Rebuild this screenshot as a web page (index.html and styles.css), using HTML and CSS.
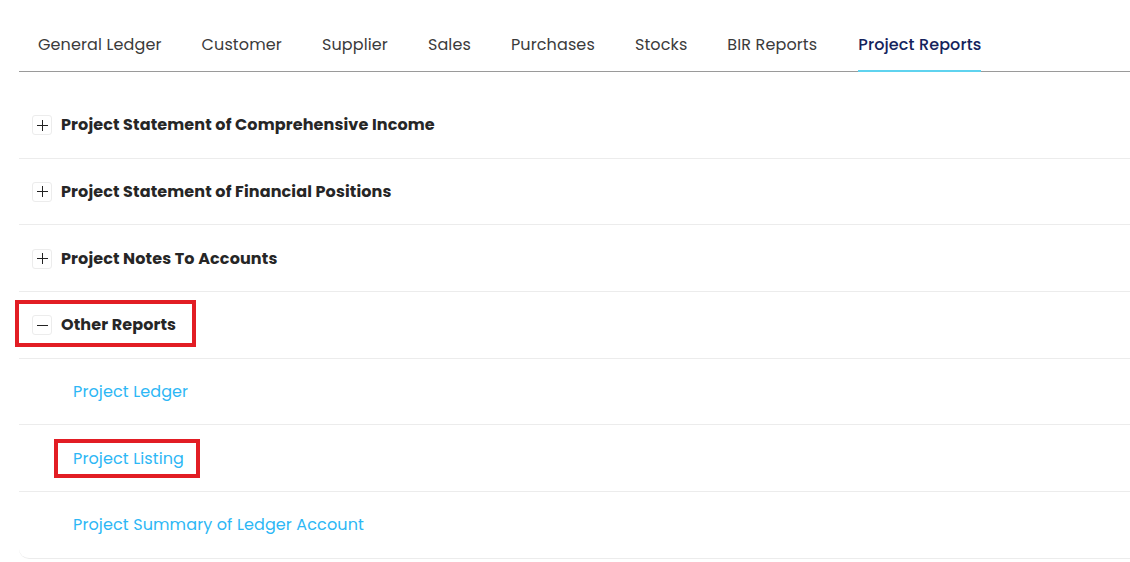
FILE: index.html
```html
<!DOCTYPE html>
<html lang="en">
<head>
  <meta charset="UTF-8" />
  <title>Reports</title>
  <meta name="viewport" content="width=device-width, initial-scale=1.0" />
  <link rel="stylesheet" href="styles.css">
</head>
<body>
  <div class="page">
    <div class="tabs">
      <div class="tab">General Ledger</div>
      <div class="tab">Customer</div>
      <div class="tab">Supplier</div>
      <div class="tab">Sales</div>
      <div class="tab">Purchases</div>
      <div class="tab">Stocks</div>
      <div class="tab">BIR Reports</div>
      <div class="tab active">Project Reports</div>
    </div>

    <div class="report-list">
      <div class="row">
        <div class="toggle">
          <span class="icon"><svg width="11" height="11" viewBox="0 0 11 11"><path d="M0 5.5h11M5.5 0v11" stroke="#222" stroke-width="1"/></svg></span>
          Project Statement of Comprehensive Income
        </div>
      </div>
      <div class="row">
        <div class="toggle">
          <span class="icon"><svg width="11" height="11" viewBox="0 0 11 11"><path d="M0 5.5h11M5.5 0v11" stroke="#222" stroke-width="1"/></svg></span>
          Project Statement of Financial Positions
        </div>
      </div>
      <div class="row">
        <div class="toggle">
          <span class="icon"><svg width="11" height="11" viewBox="0 0 11 11"><path d="M0 5.5h11M5.5 0v11" stroke="#222" stroke-width="1"/></svg></span>
          Project Notes To Accounts
        </div>
      </div>
      <div class="row">
        <div class="toggle marked">
          <span class="icon"><svg width="11" height="11" viewBox="0 0 11 11"><path d="M0 5.5h11" stroke="#222" stroke-width="1"/></svg></span>
          Other Reports
        </div>
      </div>
      <div class="row sub">
        <a class="link">Project Ledger</a>
      </div>
      <div class="row sub">
        <a class="link marked-link">Project Listing</a>
      </div>
      <div class="row sub last">
        <a class="link">Project Summary of Ledger Account</a>
      </div>
    </div>
  </div>
</body>
</html>
```

FILE: styles.css
```css
body {
  margin: 0;
  font-family: Poppins, 'Open Sans', sans-serif;
  background: #fff;
  color: #262626;
}

.page {
  padding-left: 19px;
}

.tabs {
  display: flex;
  padding-top: 33px;
  border-bottom: 1px solid #9a9a9a;
}

.tab {
  padding: 0 20px 13px;
  font-size: 16px;
  line-height: 24px;
  letter-spacing: 0.12px;
  color: #3b3b3b;
  border-bottom: 2px solid transparent;
  margin-bottom: -1px;
}

.tab:first-child {
  padding-left: 19px;
}

.tab.active {
  color: #14235c;
  font-weight: 500;
  border-bottom-color: #5fd3ef;
  padding-left: 0;
  padding-right: 0;
  margin-left: 21px;
}

.report-list {
  margin-top: 20px;
}

.row {
  height: 66.67px;
  box-sizing: border-box;
  display: flex;
  align-items: center;
  border-bottom: 1px solid #ececec;
  padding-left: 13px;
  padding-top: 1px;
}

.row.sub {
  padding-left: 54px;
}

.row.last {
  border-bottom-left-radius: 10px;
}

.toggle {
  display: flex;
  align-items: center;
  font-size: 16px;
  font-weight: 700;
  line-height: 24px;
  letter-spacing: 0.12px;
  color: #262626;
}

.icon {
  width: 18px;
  height: 18px;
  border: 1px solid #ececec;
  border-radius: 3px;
  display: flex;
  align-items: center;
  justify-content: center;
  margin-right: 9px;
}

.link {
  font-size: 16px;
  line-height: 24px;
  letter-spacing: 0.12px;
  color: #2db7f5;
  cursor: pointer;
}

.marked {
  outline: 4px solid #e21d24;
  padding: 9px 16px 6px 13px;
  margin: -9px -16px -6px -13px;
}

.marked-link {
  outline: 4px solid #e21d24;
  padding: 4px 12px 3px 15px;
  margin: -4px -12px -3px -15px;
}
```
